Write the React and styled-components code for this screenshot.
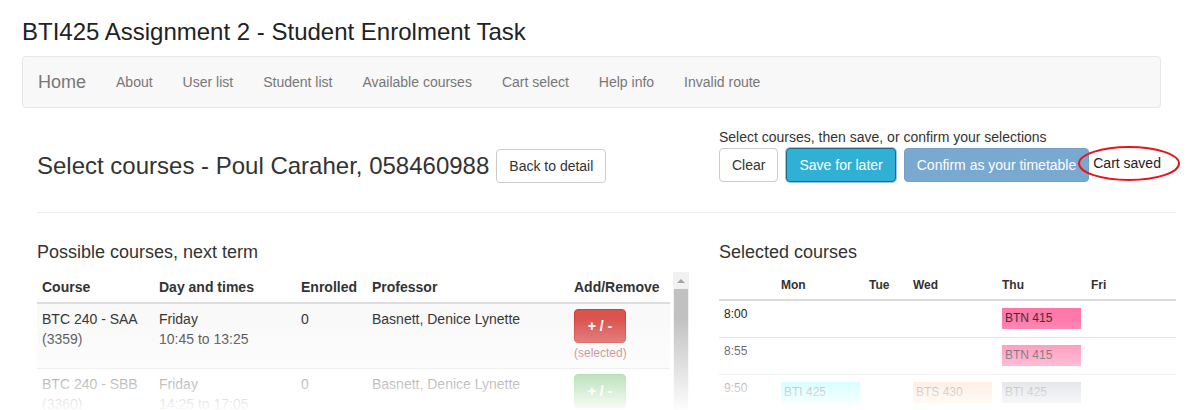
import React from 'react';
import styled, { createGlobalStyle } from 'styled-components';

const GlobalStyle = createGlobalStyle`
* { box-sizing: border-box; }
body {
  margin: 0;
  background: #fff;
  color: #333;
  font-family: "Liberation Sans", Arial, sans-serif;
  font-size: 14px;
  line-height: 1.42857;
}
`;

const links = ['About', 'User list', 'Student list', 'Available courses', 'Cart select', 'Help info', 'Invalid route'];

const courses = [
  { code: 'BTC 240 - SAA', id: '(3359)', day: 'Friday', time: '10:45 to 13:25', enrolled: '0', prof: 'Basnett, Denice Lynette', selected: true },
  { code: 'BTC 240 - SBB', id: '(3360)', day: 'Friday', time: '14:25 to 17:05', enrolled: '0', prof: 'Basnett, Denice Lynette', selected: false },
  { code: 'BTC 240 - SCC', id: '(3361)', day: 'Monday', time: '8:00 to 10:40', enrolled: '0', prof: 'Basnett, Denice Lynette', selected: false },
];

const days = ['Mon', 'Tue', 'Wed', 'Thu', 'Fri'];

const slots = [
  { time: '8:00', cells: { Thu: { label: 'BTN 415', color: '#ff78aa' } } },
  { time: '8:55', cells: { Thu: { label: 'BTN 415', color: '#ff78aa' } } },
  { time: '9:50', cells: {
    Mon: { label: 'BTI 425', color: '#8cffff' },
    Wed: { label: 'BTS 430', color: '#ffcfae' },
    Thu: { label: 'BTI 425', color: '#b2b6c0' },
  } },
  { time: '10:45', cells: { Fri: { label: 'BTC 240', color: '#9be39b' } } },
];

const App = () => {
  return (
    <Page>
      <GlobalStyle />
      <Header>
        <Title>BTI425 Assignment 2 - Student Enrolment Task</Title>
        <Navbar>
          <Brand>Home</Brand>
          {links.map((l) => (
            <NavLink key={l}>{l}</NavLink>
          ))}
        </Navbar>
      </Header>

      <Main>
        <Columns>
          <HeadingRow>
            <PageHeading>Select courses - Poul Caraher, 058460988</PageHeading>
            <Button>Back to detail</Button>
          </HeadingRow>
          <Actions>
            <Note>Select courses, then save, or confirm your selections</Note>
            <ButtonRow>
              <Button>Clear</Button>
              <Button $variant="info">Save for later</Button>
              <Button $variant="primary" disabled>Confirm as your timetable</Button>
              <Saved>
                Cart saved
                <Circle width="104" height="38" viewBox="0 0 104 38">
                  <ellipse cx="52" cy="18.5" rx="50" ry="16.5" fill="none" stroke="#e8141b" strokeWidth="2" />
                </Circle>
              </Saved>
            </ButtonRow>
          </Actions>
        </Columns>

        <Divider />

        <Columns>
          <div>
            <SectionTitle>Possible courses, next term</SectionTitle>
            <TableWrap>
              <CourseTable>
                <colgroup>
                  <col style={{ width: 117 }} />
                  <col style={{ width: 142 }} />
                  <col style={{ width: 71 }} />
                  <col style={{ width: 202 }} />
                  <col style={{ width: 101 }} />
                </colgroup>
                <thead>
                  <tr>
                    <Th>Course</Th>
                    <Th>Day and times</Th>
                    <Th>Enrolled</Th>
                    <Th>Professor</Th>
                    <Th>Add/Remove</Th>
                  </tr>
                </thead>
                <tbody>
                  {courses.map((c) => (
                    <CourseRow key={c.code}>
                      <Td>{c.code}<br />{c.id}</Td>
                      <Td>{c.day}<br />{c.time}</Td>
                      <Td>{c.enrolled}</Td>
                      <Td>{c.prof}</Td>
                      <Td>
                        <ToggleButton $selected={c.selected}>+ / -</ToggleButton>
                        {c.selected && <SelectedNote>(selected)</SelectedNote>}
                      </Td>
                    </CourseRow>
                  ))}
                </tbody>
              </CourseTable>
              <ScrollTrack>
                <ScrollArrow />
                <ScrollThumb />
              </ScrollTrack>
            </TableWrap>
          </div>

          <div>
            <SectionTitle>Selected courses</SectionTitle>
            <Timetable>
              <colgroup>
                <col style={{ width: 57 }} />
                <col style={{ width: 88 }} />
                <col style={{ width: 44 }} />
                <col style={{ width: 89 }} />
                <col style={{ width: 89 }} />
                <col style={{ width: 90 }} />
              </colgroup>
              <thead>
                <tr>
                  <DayHead />
                  {days.map((d) => (
                    <DayHead key={d}>{d}</DayHead>
                  ))}
                </tr>
              </thead>
              <tbody>
                {slots.map((s) => (
                  <tr key={s.time}>
                    <SlotCell>{s.time}</SlotCell>
                    {days.map((d) => (
                      <SlotCell key={d}>
                        {s.cells[d] ? (
                          <Block $color={s.cells[d].color}>{s.cells[d].label}</Block>
                        ) : (
                          <Spacer />
                        )}
                      </SlotCell>
                    ))}
                  </tr>
                ))}
              </tbody>
            </Timetable>
          </div>
        </Columns>
      </Main>
      <Fade />
    </Page>
  );
};

const Page = styled.div`
position: relative;
height: 410px;
overflow: hidden;`

const Header = styled.header`
padding: 19px 39px 0 22px;`

const Title = styled.h1`
margin: 0 0 11px;
font-size: 24px;
font-weight: 400;
line-height: 1.1;
color: #222;`

const Navbar = styled.nav`
display: flex;
align-items: center;
height: 52px;
background: #f8f8f8;
border: 1px solid #e7e7e7;
border-radius: 4px;`

const Brand = styled.a`
padding: 15px;
font-size: 18px;
line-height: 20px;
color: #777;`

const NavLink = styled.a`
padding: 15px;
font-size: 14px;
line-height: 20px;
color: #777;`

const Main = styled.main`
padding: 0 24px 0 37px;`

const Columns = styled.div`
display: grid;
grid-template-columns: 652px 457px;
column-gap: 30px;
align-items: start;`

const HeadingRow = styled.div`
display: flex;
align-items: flex-start;
gap: 7px;
padding-top: 41px;`

const PageHeading = styled.h2`
margin: 4px 0 0;
font-size: 24px;
font-weight: 400;
line-height: 1.1;
color: #333;`

const Actions = styled.div`
padding-top: 19px;`

const Note = styled.div`
line-height: 20px;
color: #333;`

const ButtonRow = styled.div`
display: flex;
align-items: flex-start;
margin-top: 1px;

& > button + button {
  margin-left: 8px;
}`

const variants = {
  default: 'background: #fff; border-color: #ccc; color: #333;',
  info: 'background: #31b0d5; border-color: #1b6d85; color: #fff; box-shadow: 0 0 0 1px #9cc3f3;',
  primary: 'background: #337ab7; border-color: #2e6da4; color: #fff; opacity: 0.65;',
};

const Button = styled.button`
height: 34px;
padding: 6px 12px;
border: 1px solid;
border-radius: 4px;
font-family: inherit;
font-size: 14px;
line-height: 20px;
white-space: nowrap;
${(p) => variants[p.$variant || 'default']}`

const Saved = styled.span`
position: relative;
margin: 5px 0 0 4px;
line-height: 20px;
color: #222;`

const Circle = styled.svg`
position: absolute;
left: -16px;
top: -8px;`

const Divider = styled.hr`
margin: 29px 0 30px;
border: 0;
border-top: 1px solid #eee;`

const SectionTitle = styled.h4`
margin: 0 0 9px;
font-size: 18px;
font-weight: 400;
line-height: 1.1;
color: #333;`

const TableWrap = styled.div`
display: flex;
gap: 3px;`

const CourseTable = styled.table`
width: 633px;
table-layout: fixed;
border-collapse: collapse;`

const Th = styled.th`
padding: 5px;
text-align: left;
font-weight: 700;
line-height: 20px;
border-bottom: 2px solid #ddd;
white-space: nowrap;`

const CourseRow = styled.tr`
&:nth-of-type(odd) {
  background: #f9f9f9;
}`

const Td = styled.td`
padding: 5px;
vertical-align: top;
line-height: 20px;
border-top: 1px solid #ddd;`

const ToggleButton = styled.button`
display: block;
width: 52px;
height: 34px;
padding: 0;
border: 1px solid ${(p) => (p.$selected ? '#d43f3a' : '#4cae4c')};
border-radius: 4px;
background: ${(p) => (p.$selected ? '#d9534f' : '#5cb85c')};
color: #fff;
font-family: inherit;
font-size: 14px;
font-weight: 700;`

const SelectedNote = styled.div`
font-size: 12px;
line-height: 20px;
color: #b35c5a;`

const ScrollTrack = styled.div`
display: flex;
flex-direction: column;
width: 16px;
height: 150px;
background: #f1f1f1;`

const ScrollArrow = styled.div`
height: 17px;
display: flex;
align-items: center;
justify-content: center;

&::before {
  content: '';
  border-left: 4px solid transparent;
  border-right: 4px solid transparent;
  border-bottom: 4px solid #a3a3a3;
}`

const ScrollThumb = styled.div`
flex: 1;
margin: 0 1px;
background: #c1c1c1;`

const Timetable = styled.table`
width: 457px;
table-layout: fixed;
border-collapse: collapse;`

const DayHead = styled.th`
padding: 5px;
text-align: left;
font-size: 12px;
font-weight: 700;
line-height: 17px;
border-bottom: 2px solid #ddd;`

const SlotCell = styled.td`
padding: 5px;
vertical-align: top;
font-size: 12px;
line-height: 17px;
color: #222;
border-top: 1px solid #ddd;`

const Block = styled.div`
width: 79px;
height: 21px;
margin: 2px 0 3px;
padding-left: 3px;
line-height: 21px;
color: #333;
background: ${(p) => p.$color};`

const Spacer = styled.div`
height: 26px;`

const Fade = styled.div`
position: absolute;
left: 0;
right: 0;
top: 318px;
height: 92px;
pointer-events: none;
background: linear-gradient(to bottom, rgba(255, 255, 255, 0), rgba(255, 255, 255, 0.97));`

export default App;
